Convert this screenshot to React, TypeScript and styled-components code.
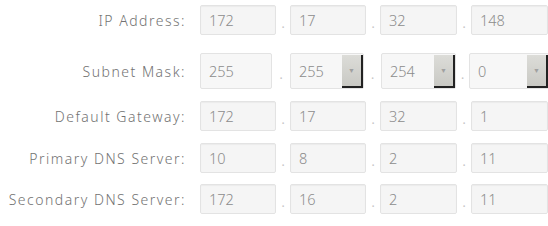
import React from "react";
import styled, { createGlobalStyle } from "styled-components";

const Global = createGlobalStyle`
  html, body { margin: 0; padding: 0; background: #ffffff; }
  body { font-family: "Noto Sans", "Liberation Sans", sans-serif; }
`;

const Form = styled.div`
  display: flex;
  flex-direction: column;
  padding-top: 5px;
  width: 548px;
`;

const Row = styled.div<{ $h: number; $mb: number }>`
  display: grid;
  grid-template-columns: 186px 1fr;
  column-gap: 14px;
  align-items: center;
  height: ${(p) => p.$h}px;
  margin-bottom: ${(p) => p.$mb}px;
`;

const Label = styled.div`
  text-align: right;
  font-size: 14px;
  font-weight: 300;
  letter-spacing: 1.5px;
  color: #727272;
  white-space: nowrap;
`;

const Octets = styled.div`
  display: flex;
  align-items: center;
`;

const Field = styled.div<{ $w: number }>`
  box-sizing: border-box;
  width: ${(p) => p.$w}px;
  height: 30px;
  border: 1px solid #e3e3e3;
  border-radius: 2px;
  background: #f5f5f5;
  box-shadow: inset 0 1px 1px rgba(0, 0, 0, 0.04);
  display: flex;
  align-items: center;
  padding-left: 8px;
  font-size: 14.5px;
  font-weight: 300;
  color: #8c8c8c;
`;

const SelectBox = styled.div<{ $w: number }>`
  box-sizing: border-box;
  width: ${(p) => p.$w}px;
  height: 36px;
  border: 1px solid #e3e3e3;
  border-radius: 2px;
  background: #f7f7f7;
  display: flex;
  align-items: stretch;
  font-size: 14.5px;
  font-weight: 300;
  color: #8c8c8c;
`;

const SelectText = styled.div`
  flex: 1;
  display: flex;
  align-items: center;
  padding-left: 8px;
`;

const Arrow = styled.div`
  box-sizing: border-box;
  width: 21px;
  margin-top: 1px;
  background: linear-gradient(#dcdcd8, #c9c9c4);
  border-right: 2px solid #222;
  border-bottom: 2px solid #222;
  display: flex;
  align-items: center;
  justify-content: center;
  color: #a0a0a0;
  font-size: 7px;
`;

const Dot = styled.div<{ $w: number }>`
  width: ${(p) => p.$w}px;
  text-align: center;
  color: #c4c4c4;
  font-size: 12px;
  padding-top: 6px;
`;

type RowData = { label: string; values: string[] };

const rows: RowData[] = [
  { label: "IP Address:", values: ["172", "17", "32", "148"] },
  { label: "Default Gateway:", values: ["172", "17", "32", "1"] },
  { label: "Primary DNS Server:", values: ["10", "8", "2", "11"] },
  { label: "Secondary DNS Server:", values: ["172", "16", "2", "11"] },
];

const widths = [76, 76, 77, 77];

function TextRow({ data, mb }: { data: RowData; mb: number }) {
  return (
    <Row $h={30} $mb={mb}>
      <Label>{data.label}</Label>
      <Octets>
        {data.values.map((v, i) => (
          <React.Fragment key={i}>
            {i > 0 && <Dot $w={14}>.</Dot>}
            <Field $w={widths[i]}>{v}</Field>
          </React.Fragment>
        ))}
      </Octets>
    </Row>
  );
}

export default function App() {
  const mask = ["255", "255", "254", "0"];
  const maskW = [72, 74, 75, 80];
  const maskDot = [0, 18, 17, 13];
  return (
    <>
      <Global />
      <Form>
        <TextRow data={rows[0]} mb={18} />
        <Row $h={36} $mb={12}>
          <Label>Subnet Mask:</Label>
          <Octets>
            {mask.map((v, i) => (
              <React.Fragment key={i}>
                {i > 0 && <Dot $w={maskDot[i]}>.</Dot>}
                <SelectBox $w={maskW[i]}>
                  <SelectText>{v}</SelectText>
                  {i > 0 && <Arrow>▼</Arrow>}
                </SelectBox>
              </React.Fragment>
            ))}
          </Octets>
        </Row>
        <TextRow data={rows[1]} mb={12} />
        <TextRow data={rows[2]} mb={11} />
        <TextRow data={rows[3]} mb={0} />
      </Form>
    </>
  );
}
